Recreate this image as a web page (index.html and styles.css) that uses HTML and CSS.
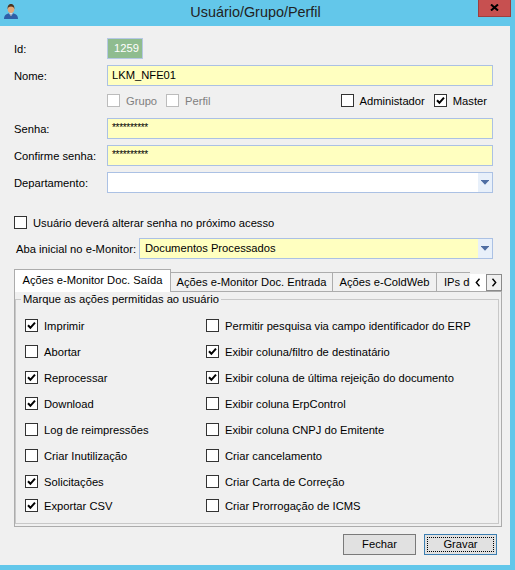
FILE: index.html
```html
<!DOCTYPE html>
<html lang="pt-BR">
<head>
<meta charset="utf-8">
<title>Usuário/Grupo/Perfil</title>
<link rel="stylesheet" href="styles.css">
</head>
<body>
<div class="window">
  <header class="titlebar">
    <div class="tb-left">
      <svg class="appicon" viewBox="0 0 16 16" width="16" height="16">
        <path d="M1 16 C1 11.5 4 10.2 8 10.2 C12 10.2 15 11.5 15 16 Z" fill="#2F5FA8"/>
        <path d="M6.2 10.2 L8 13.8 L9.8 10.2 Z" fill="#fff"/>
        <path d="M7.6 11 L8.4 11 L8.3 14 L7.7 14 Z" fill="#1B3563"/>
        <ellipse cx="8" cy="6" rx="3.3" ry="4" fill="#E3A878"/>
        <path d="M4.6 6.2 C4.3 2.6 6 1 8 1 C10 1 11.7 2.6 11.4 6.2 C10.8 4.2 9.5 3.6 8 3.6 C6.5 3.6 5.2 4.2 4.6 6.2 Z" fill="#4A3422"/>
      </svg>
    </div>
    <div class="title">Usuário/Grupo/Perfil</div>
    <div class="tb-right">
      <div class="close">
        <svg viewBox="0 0 9 7" width="9" height="7"><path d="M1 0.5 L8 6.5 M8 0.5 L1 6.5" stroke="#000" stroke-width="2" fill="none"/></svg>
      </div>
    </div>
  </header>

  <main class="client">
    <div class="row r-id"><span class="lbl">Id:</span><span class="idbox">1259</span></div>
    <div class="row r-next"><span class="lbl">Nome:</span><div class="field yellow">LKM_NFE01</div></div>

    <div class="flags">
      <label class="chk disabled"><span class="box"></span>Grupo</label>
      <label class="chk disabled"><span class="box"></span>Perfil</label>
      <label class="chk push"><span class="box"></span>Administador</label>
      <label class="chk"><span class="box"><svg viewBox="0 0 11 11" width="11" height="11"><path d="M2 5.3 L4.4 7.8 L9 2.6" stroke="#000" stroke-width="2" fill="none"/></svg></span>Master</label>
    </div>

    <div class="row r-senha"><span class="lbl">Senha:</span><div class="field yellow pwd">**********</div></div>
    <div class="row r-next"><span class="lbl">Confirme senha:</span><div class="field yellow pwd">**********</div></div>
    <div class="row r-next"><span class="lbl">Departamento:</span>
      <div class="combo"><span class="val"></span><span class="drop"><svg viewBox="0 0 8 5" width="8" height="5"><path d="M0 0 H8 V1 H0 Z M0.5 1 H7.5 L4 4.8 Z" fill="#4F6EA3"/></svg></span></div>
    </div>

    <div class="row r-alterar">
      <label class="chk"><span class="box"></span>Usuário deverá alterar senha no próximo acesso</label>
    </div>

    <div class="row r-aba"><span class="lbl lbl-aba">Aba inicial no e-Monitor:</span>
      <div class="combo yellow aba"><span class="val">Documentos Processados</span><span class="drop"><svg viewBox="0 0 8 5" width="8" height="5"><path d="M0 0 H8 V1 H0 Z M0.5 1 H7.5 L4 4.8 Z" fill="#4F6EA3"/></svg></span></div>
    </div>

    <div class="tabstrip">
      <div class="tabs">
        <div class="tab active t1">Ações e-Monitor Doc. Saída</div>
        <div class="tab t2">Ações e-Monitor Doc. Entrada</div>
        <div class="tab t3">Ações e-ColdWeb</div>
        <div class="tab t4">IPs de Acesso</div>
      </div>
      <div class="scroller">
        <span class="sbtn sleft"><svg viewBox="0 0 6 9" width="6" height="9"><path d="M4.5 0.8 L1.3 4.5 L4.5 8.2" stroke="#000" stroke-width="1.4" fill="none"/></svg></span>
        <span class="sbtn sright"><svg viewBox="0 0 6 9" width="6" height="9"><path d="M1.5 0.8 L4.7 4.5 L1.5 8.2" stroke="#000" stroke-width="1.4" fill="none"/></svg></span>
      </div>
    </div>

    <div class="panel">
      <fieldset class="group">
        <legend>Marque as ações permitidas ao usuário</legend>
        <div class="grid">
          <label class="chk"><span class="box"><svg viewBox="0 0 11 11" width="11" height="11"><path d="M2 5.3 L4.4 7.8 L9 2.6" stroke="#000" stroke-width="2" fill="none"/></svg></span>Imprimir</label>
          <label class="chk"><span class="box"></span>Permitir pesquisa via campo identificador do ERP</label>
          <label class="chk"><span class="box"></span>Abortar</label>
          <label class="chk"><span class="box"><svg viewBox="0 0 11 11" width="11" height="11"><path d="M2 5.3 L4.4 7.8 L9 2.6" stroke="#000" stroke-width="2" fill="none"/></svg></span>Exibir coluna/filtro de destinatário</label>
          <label class="chk"><span class="box"><svg viewBox="0 0 11 11" width="11" height="11"><path d="M2 5.3 L4.4 7.8 L9 2.6" stroke="#000" stroke-width="2" fill="none"/></svg></span>Reprocessar</label>
          <label class="chk"><span class="box"><svg viewBox="0 0 11 11" width="11" height="11"><path d="M2 5.3 L4.4 7.8 L9 2.6" stroke="#000" stroke-width="2" fill="none"/></svg></span>Exibir coluna de última rejeição do documento</label>
          <label class="chk"><span class="box"><svg viewBox="0 0 11 11" width="11" height="11"><path d="M2 5.3 L4.4 7.8 L9 2.6" stroke="#000" stroke-width="2" fill="none"/></svg></span>Download</label>
          <label class="chk"><span class="box"></span>Exibir coluna ErpControl</label>
          <label class="chk"><span class="box"></span>Log de reimpressões</label>
          <label class="chk"><span class="box"></span>Exibir coluna CNPJ do Emitente</label>
          <label class="chk"><span class="box"></span>Criar Inutilização</label>
          <label class="chk"><span class="box"></span>Criar cancelamento</label>
          <label class="chk"><span class="box"><svg viewBox="0 0 11 11" width="11" height="11"><path d="M2 5.3 L4.4 7.8 L9 2.6" stroke="#000" stroke-width="2" fill="none"/></svg></span>Solicitações</label>
          <label class="chk"><span class="box"></span>Criar Carta de Correção</label>
          <label class="chk last"><span class="box"><svg viewBox="0 0 11 11" width="11" height="11"><path d="M2 5.3 L4.4 7.8 L9 2.6" stroke="#000" stroke-width="2" fill="none"/></svg></span>Exportar CSV</label>
          <label class="chk last"><span class="box"></span>Criar Prorrogação de ICMS</label>
        </div>
      </fieldset>
    </div>

    <div class="buttons">
      <button class="btn">Fechar</button>
      <button class="btn default">Gravar</button>
    </div>
  </main>
</div>
</body>
</html>
```

FILE: styles.css
```css
* { box-sizing: border-box; }
html, body { margin: 0; padding: 0; }
body {
  width: 515px;
  height: 570px;
  overflow: hidden;
  background: #63C7EA;
  font-family: "Liberation Sans", Arial, sans-serif;
  font-size: 11.2px;
  color: #000;
}
.window {
  width: 515px;
  height: 570px;
  display: flex;
  flex-direction: column;
}

/* title bar */
.titlebar {
  height: 26px;
  display: grid;
  grid-template-columns: 1fr auto 1fr;
  padding-right: 4px;
}
.tb-left { display: flex; align-items: flex-start; }
.appicon { margin: 3px 0 0 3px; }
.title {
  font-size: 14.4px;
  font-weight: normal;
  color: #222;
  line-height: 25px;
}
.tb-right { display: flex; justify-content: flex-end; align-items: flex-start; }
.close {
  width: 33px;
  height: 17px;
  background: #C75050;
  border: 1px solid #9E3E3E;
  border-top: none;
  display: flex;
  align-items: flex-start;
  justify-content: center;
  padding-top: 4px;
}

/* client area */
.client {
  flex: 1;
  margin: 0 5px 5px 0;
  background: #F0F0F0;
  padding-top: 12px;
  display: flex;
  flex-direction: column;
}
.row {
  display: flex;
  align-items: center;
  padding-left: 14px;
}
.lbl { width: 93px; flex: none; }
.r-id { height: 21px; }
.r-next { margin-top: 6px; }
.r-senha { margin-top: 11px; }
.r-alterar { margin-top: 23px; height: 13px; }
.r-aba { margin-top: 9px; padding-left: 16px; }
.lbl-aba { width: 123px; }

.idbox {
  width: 36px;
  height: 21px;
  background: #8FBC8F;
  border: 1px solid #B6C8E4;
  color: #fff;
  text-align: right;
  padding-right: 3px;
  line-height: 19px;
}
.field {
  width: 386px;
  height: 21px;
  border: 1px solid #ABC1E4;
  background: #fff;
  padding-left: 4px;
  line-height: 19px;
  white-space: nowrap;
}
.yellow { background: #FFFFC0; }
.pwd {
  font-size: 10px;
  letter-spacing: -0.3px;
  line-height: 17px;
}
.combo {
  width: 386px;
  height: 21px;
  border: 1px solid #ABC1E4;
  background: #fff;
  display: flex;
}
.combo.aba { width: 354px; }
.combo.yellow { background: #FFFFC0; }
.combo .val { flex: 1; padding-left: 5px; line-height: 19px; white-space: nowrap; }
.combo .drop {
  width: 14px;
  background: #E8F0FA;
  display: flex;
  align-items: center;
  justify-content: center;
}

/* checkboxes */
.flags {
  display: flex;
  align-items: center;
  gap: 9px;
  height: 13px;
  margin-top: 8px;
  padding-left: 107px;
  padding-right: 23px;
}
.push { margin-left: auto; }
.chk {
  display: flex;
  align-items: center;
  gap: 6px;
  height: 13px;
  white-space: nowrap;
}
.box {
  width: 13px;
  height: 13px;
  flex: none;
  border: 1px solid #333;
  background: #fff;
  display: flex;
  align-items: center;
  justify-content: center;
}
.chk.disabled { color: #7F7F7F; }
.chk.disabled .box { border-color: #BCBCBC; }

/* tabs */
.tabstrip {
  display: flex;
  margin-top: 10px;
  margin-left: 14px;
  width: 488px;
  height: 23px;
  margin-bottom: -1px;
  position: relative;
  z-index: 1;
}
.tabs {
  width: 456px;
  height: 23px;
  overflow: hidden;
  display: flex;
  align-items: flex-start;
}
.tab {
  flex: none;
  margin-top: 3px;
  height: 19px;
  border: 1px solid #ACACAC;
  border-bottom: none;
  background: #F0F0F0;
  margin-left: -1px;
  text-align: center;
  line-height: 18px;
  white-space: nowrap;
  overflow: hidden;
}
.tab.active {
  margin-top: 0;
  margin-left: 0;
  height: 23px;
  background: #FFFFFF;
  line-height: 21px;
  position: relative;
  z-index: 1;
}
.t1 { width: 157px; }
.t2 { width: 163px; }
.t3 { width: 105px; }
.t4 { width: 80px; text-align: left; padding-left: 7px; }
.scroller {
  display: flex;
  margin-top: 5px;
  height: 17px;
}
.sbtn {
  width: 16px;
  height: 17px;
  display: flex;
  align-items: center;
  justify-content: center;
}
.sleft { background: #FFFFFF; }
.sright { background: #F0F0F0; border: 1px solid #8A8A8A; }

.panel {
  margin-left: 14px;
  width: 488px;
  height: 236px;
  border: 1px solid #ACACAC;
  background: #F0F0F0;
  display: flex;
  flex-direction: column;
}
.group {
  flex: 1;
  margin: 1px 2px 2px 0;
  padding: 0;
  min-width: 0;
  border: 1px solid #C8C8C8;
}
.group legend {
  margin-left: 5px;
  padding: 0 2px;
  line-height: 13px;
}
.grid {
  display: grid;
  grid-template-columns: 181px 1fr;
  row-gap: 13px;
  padding: 13px 0 0 9px;
}
.chk.last { margin-top: -2px; }

/* buttons */
.buttons {
  display: flex;
  justify-content: flex-end;
  gap: 8px;
  margin-top: 7px;
  padding-right: 13px;
}
.btn {
  width: 73px;
  height: 21px;
  border: 1px solid #7A7A7A;
  background: #E1E1E1;
  font-family: inherit;
  font-size: inherit;
  color: #000;
  padding: 0;
  text-align: center;
  line-height: 19px;
}
.btn.default {
  border-color: #3C7FB1;
  outline: 1px dotted #000;
  outline-offset: -4px;
}
```
